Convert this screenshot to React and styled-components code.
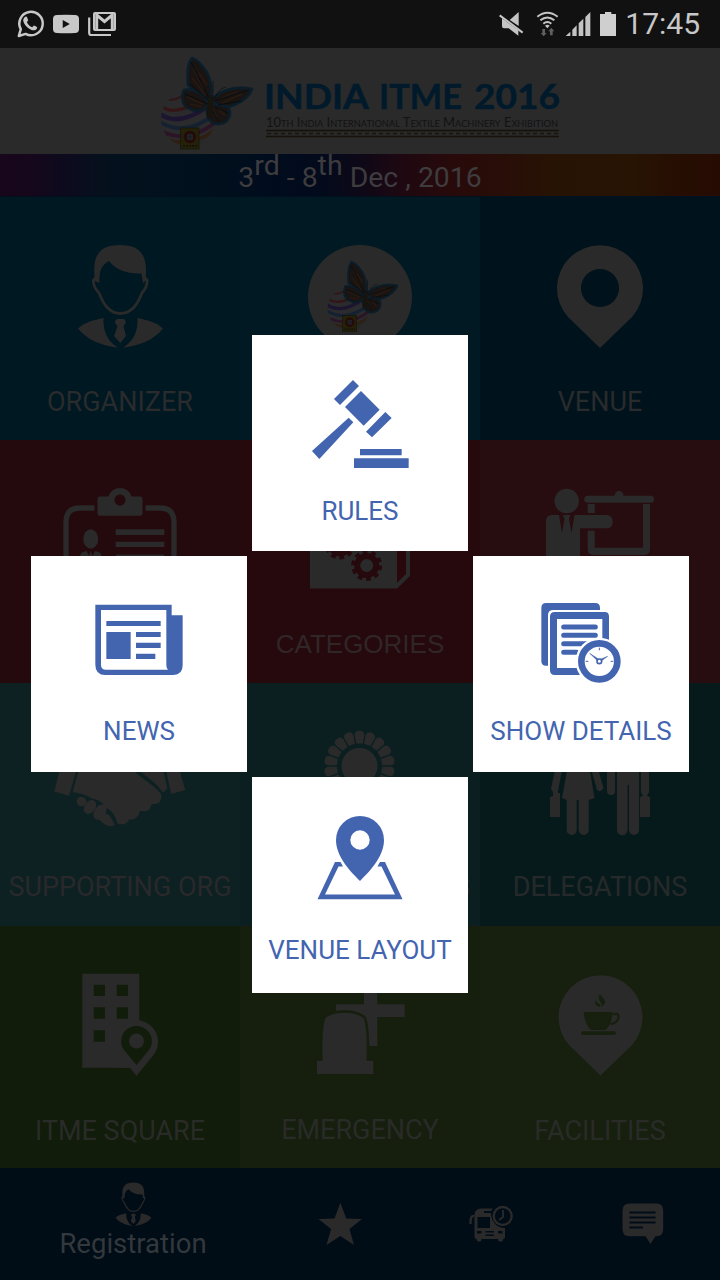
import React from 'react';
import styled, { createGlobalStyle } from 'styled-components';

const GlobalStyle = createGlobalStyle`
  * { box-sizing: border-box; }
  body { margin: 0; background: #000; font-family: Roboto, "Liberation Sans", sans-serif; }
`;

const INK = '#2a2a2a';
const BLUE = '#4365b0';

const Screen = styled.div`
  position: relative;
  width: 720px;
  height: 1280px;
  display: flex;
  flex-direction: column;
  overflow: hidden;
`;

const StatusBar = styled.div`
  height: 48px;
  flex: none;
  display: flex;
  justify-content: space-between;
  align-items: center;
  padding: 0 20px 0 16px;
  background: #111;
  color: #c8c8c8;
`;

const StatusIcons = styled.div`
  display: flex;
  align-items: center;
  svg { display: block; }
`;

const Clock = styled.span`
  font-size: 30px;
  line-height: 48px;
  margin-left: 8px;
`;

const Header = styled.header`
  height: 106px;
  flex: none;
  display: flex;
  justify-content: center;
  padding-top: 6px;
  background: #2a2a2a;
`;

const LogoArt = styled.svg`
  display: block;
  width: 440px;
  height: 96px;
  overflow: visible;
  font-family: Lato, sans-serif;
`;

const DateStrip = styled.div`
  height: 43px;
  flex: none;
  display: flex;
  justify-content: center;
  border-bottom: 1px solid #00101f;
  background: linear-gradient(90deg, #18061b 0%, #16071b 4%, #0d0a1d 9%, #06101d 14%, #02111d 20%, #01101d 28%, #000c1d 38%, #030a1c 45%, #100816 51%, #1f0811 56%, #280a0a 63%, #280d08 69%, #271304 77%, #271403 88%, #260e02 94%, #260b02 100%);
  color: #3e3c3e;
  font-size: 28.400px;
  line-height: 48px;
  white-space: pre;
`;

const Sup = styled.sup`
  font-size: 28.500px;
  line-height: 0;
  vertical-align: 12px;
`;

const Tiles = styled.main`
  display: grid;
  grid-template-columns: repeat(3, 240px);
  grid-template-rows: 243px 243px 243px 242px;
`;

const Tile = styled.div`
  display: flex;
  flex-direction: column;
  align-items: center;
  padding-top: 44px;
  background: ${(p) => p.$bg};
`;

const TileArt = styled.svg`
  display: block;
  width: 140px;
  height: 112px;
  flex: none;
`;

const TileLabel = styled.span`
  margin-top: ${(p) => p.$gap || 33}px;
  font-family: ${(p) => p.$font || 'Roboto'}, "Liberation Sans", sans-serif;
  font-size: ${(p) => p.$size || 27}px;
  line-height: 32px;
  color: ${(p) => p.$ink || '#292b2c'};
  white-space: nowrap;
`;

const BottomBar = styled.nav`
  height: 112px;
  flex: none;
  display: grid;
  grid-template-columns: 264px 151px 151px 153px;
  background: #000c16;
`;

const NavItem = styled.div`
  display: flex;
  flex-direction: column;
  align-items: center;
  justify-content: ${(p) => (p.$labelled ? 'flex-start' : 'center')};
  padding: ${(p) => (p.$labelled ? '14px 0 0 2px' : '0')};
  svg { display: block; }
`;

const NavLabel = styled.span`
  font-size: 27.5px;
  line-height: 34px;
  color: #33383d;
`;

const Overlay = styled.div`
  position: absolute;
  inset: 335px 31px auto 31px;
  display: grid;
  grid-template-columns: repeat(3, 216px);
  grid-template-rows: repeat(3, 216px);
  gap: 5px;
`;

const Card = styled.div`
  grid-area: ${(p) => p.$row} / ${(p) => p.$col};
  display: flex;
  flex-direction: column;
  align-items: center;
  padding-top: 38px;
  background: #fff;
`;

const CardArt = styled.svg`
  display: block;
  width: 110px;
  height: 100px;
  flex: none;
  fill: ${BLUE};
`;

const CardLabel = styled.span`
  margin-top: ${(p) => p.$gap}px;
  font-size: 26px;
  line-height: 30px;
  color: ${BLUE};
  white-space: nowrap;
`;

function Businessman({ width, height, ink = INK }) {
  return (
    <svg width={width} height={height} viewBox="77 244 87 105" fill={ink}>
      <path d="M95 281C92 258 97 245 120 245C143 245 148 258 145.500 281L143 283L141.500 273.500C127 274 116 270 109 261C101 265 99 272 99.500 283Z" />
      <path d="M95.500 278L93.300 280.500C93.500 289 97.500 290 99.500 294C104 306 111 313.500 120.300 313.500C129.500 313.500 137 306 141.500 294C143.500 290 147 289 147.200 280.500L145 278" fill="none" stroke={ink} strokeWidth="2.800" />
      <path d="M103.500 318C103 331 107 341 118 347.500C102 346 87 340 78 328.500C84 322.500 94 320 103.500 318Z" />
      <path d="M137.500 318C138 331 134 341 123 347.500C139 346 154 340 163 328.500C157 322.500 147 320 137.500 318Z" />
      <path d="M117 319H124L126 322L123.500 326.500L126 336L120.300 343L114 336L117.500 326.500L114.500 322Z" />
    </svg>
  );
}

function ButterflyMark() {
  return (
    <g>
      <clipPath id="globe"><circle cx="188" cy="119" r="27" /></clipPath>
      <g clipPath="url(#globe)" fill="none">
        <circle cx="188" cy="119" r="27" fill="#2b2b2d" />
        <path d="M168 99Q175 102 186 93" stroke="#2f1717" strokeWidth="2.500" />
        <path d="M163 107Q172 114 190 106" stroke="#331516" strokeWidth="3.200" />
        <path d="M160 114Q178 127 207 107" stroke="#1d1530" strokeWidth="4.500" />
        <path d="M160 122Q186 138 216 113" stroke="#142131" strokeWidth="3.800" />
        <path d="M163 132Q190 144 217 121" stroke="#2a1425" strokeWidth="3.600" />
        <path d="M168 140Q194 148 217 128" stroke="#301e10" strokeWidth="3.600" />
        <path d="M190 148Q209 143 216 131" stroke="#122c25" strokeWidth="3.600" />
      </g>
      <g fill="#191411" stroke="#0a1d29" strokeWidth="2.600" strokeLinejoin="round">
        <path d="M192 58C186 65 188 78 188 85C194 91 202 98 209 101C213 93 211 79 206 71C202 65 198 60 192 58Z" />
        <path d="M184 90C195 88 204 95 208 103C205 111 198 113 190 109C182 106 181 97 184 90Z" />
        <path d="M213 99C222 89 238 86 252 89C248 100 234 107 218 109Z" />
        <path d="M207 106C206 119 212 125 219 124C230 123 232 113 228 107L215 104Z" />
      </g>
      <g fill="none" stroke="#291910" strokeWidth="1.700">
        <path d="M193 68L204 89M192 78L205 95M199 73L207 85M187 97L203 104M190 104L202 107M219 99L237 92M222 103L242 94M212 108L217 118M218 108L225 116" />
      </g>
      <g fill="none" stroke="#070d12" strokeWidth="1">
        <path d="M191 62L209 98M190 84L208 100M185 94L208 104M214 101L249 90M218 105L241 101M210 107L219 122M215 107L228 113" />
        <path d="M213 99L213 81M214 99C218 91 222 88 226 87" strokeWidth=".7" />
      </g>
      <ellipse cx="210" cy="107" rx="3" ry="12" transform="rotate(8 210 107)" fill="#16140d" />
      <rect x="180.500" y="128" width="18.500" height="21" fill="#252108" stroke="#12120b" strokeWidth=".7" />
      <circle cx="190" cy="137" r="4.700" fill="#25262b" stroke="#230b09" strokeWidth="3" />
      <path d="M187 137H193M190 134V140" stroke="#17181d" strokeWidth="1" />
      <path d="M183 146H197" stroke="#15130a" strokeWidth="2" strokeDasharray="2 1" />
    </g>
  );
}

function Logo() {
  return (
    <LogoArt viewBox="140 54 440 96">
      <ButterflyMark />
      <g fill="#001a2b" stroke="#001a2b" strokeWidth=".5" fontWeight="700" fontSize="34">
        <text x="264" y="108.500" textLength="105" lengthAdjust="spacingAndGlyphs">INDIA</text>
        <text x="379" y="108.500" textLength="83" lengthAdjust="spacingAndGlyphs">ITME</text>
        <text x="474" y="108.500" textLength="86" lengthAdjust="spacingAndGlyphs">2016</text>
      </g>
      <text x="266" y="126.500" fill="#121212" fontSize="14" fontVariant="small-caps" textLength="292" lengthAdjust="spacingAndGlyphs">10th India International Textile Machinery Exhibition</text>
      <path d="M266 130.500H559M266 136.500H559" stroke="#171208" strokeWidth="1.300" />
      <path d="M267 133.500H559" stroke="#1a1509" strokeWidth="1.600" strokeDasharray="4 3" />
    </LogoArt>
  );
}

function LeftStatus() {
  return (
    <svg width="102" height="30" viewBox="16 8 102 30">
      <path d="M18.800 35L20.800 28.200A11.700 11.700 0 1 1 25.600 32.900Z" fill="none" stroke="#c8c8c8" strokeWidth="2.500" strokeLinejoin="round" />
      <path d="M24.700 16.200C26 15 27 15.700 27.300 17L28.200 19.200L26.900 21.200C28.300 24 29.800 25.200 32.200 26.300L33.900 24.500C35.300 25 36.300 25.600 37.300 26.400C36.800 29.200 33.500 30 31 28.700C26.800 26.800 24.300 23.700 23.300 20.200C23 18.600 23.700 17 24.700 16.200Z" fill="#c8c8c8" />
      <path fillRule="evenodd" fill="#c8c8c8" d="M57 14Q66 13.300 75 14Q79 14.200 79 18V28Q79 31.800 75 32Q66 32.700 57 32Q53 31.800 53 28V18Q53 14.200 57 14ZM62.700 19V27L69.800 23Z" />
      <rect x="94" y="12" width="21" height="17" rx="1" fill="none" stroke="#c8c8c8" strokeWidth="2" />
      <path d="M96.700 29V14L104.500 20.500L112.300 14V29" fill="none" stroke="#c8c8c8" strokeWidth="3" />
      <path d="M89.200 16.500V32Q89.200 34 91.200 34H111" fill="none" stroke="#c8c8c8" strokeWidth="2.200" />
    </svg>
  );
}

function RightStatus() {
  return (
    <svg width="118" height="30" viewBox="498 8 118 30">
      <g transform="translate(360 0) scale(.33333)" fill="#c4c4c4">
        <path d="M446 57L473 33V75Z" />
        <path d="M423 52L472 88V104L443 82H429Q423 82 423 76Z" />
        <path d="M416 43L485 95" stroke="#c4c4c4" strokeWidth="6" />
        <g fill="none" stroke="#c4c4c4" strokeWidth="6">
          <path d="M529 47Q559 23 590 47M538 58Q559 41 580 58M547 68Q559 58 571 68" />
        </g>
        <path d="M559 82L552 74Q559 68 566 74Z" />
        <path d="M544 84H552V96H557L548 106L539 96H544ZM567 103H575V91H580L571 80L562 91H567Z" fill="#5f5f5f" />
        <path d="M614 105L628 92V105ZM634 86L647 73V105H634ZM653 67L667 53V105H653ZM673 48L688 33V105H673Z" />
        <path d="M732 33H751V39H765V105H717V39H732Z" fill="#cfcfcf" />
      </g>
    </svg>
  );
}

const ArtSlot = styled.div`
  display: flex;
  justify-content: center;
  height: 112px;
  padding-top: 3px;
`;

const OrganizerArt = () => (
  <ArtSlot><Businessman width={87} height={105} /></ArtSlot>
);

const EventArt = () => (
  <TileArt viewBox="290 241 140 112">
    <circle cx="360" cy="297" r="52" fill={INK} />
    <g transform="translate(204.500 217.500) scale(.765)"><ButterflyMark /></g>
  </TileArt>
);

const VenueArt = () => (
  <TileArt viewBox="530 241 140 112" fill={INK}>
    <path fillRule="evenodd" d="M600 348L568 317A43 43 0 1 1 632 317ZM619 288A19 19 0 1 0 581 288A19 19 0 1 0 619 288Z" />
  </TileArt>
);

const BadgeArt = () => (
  <TileArt viewBox="50 484 140 112" fill={INK}>
    <path d="M94.500 508H80Q66 508 66 522V580M145.500 508H160Q174 508 174 522V580" fill="none" stroke={INK} strokeWidth="5.300" />
    <path fillRule="evenodd" d="M99.500 496.500H108.500A12 12 0 0 1 131.500 496.500H140.500Q142.500 496.500 142.500 498.500V513.500Q142.500 515.700 140.500 515.700H99.500Q97.500 515.700 97.500 513.500V498.500Q97.500 496.500 99.500 496.500ZM125.500 500A5.500 5.500 0 1 0 114.500 500A5.500 5.500 0 1 0 125.500 500Z" />
    <ellipse cx="90.700" cy="539" rx="7.500" ry="9.700" />
    <path d="M80 556Q80 552 86.500 551L89 556L90.700 551L92.500 556L95 551Q101.500 552 101.500 556V565H80Z" />
    <path d="M115.700 529.300H164.300V535H115.700ZM115.700 541.700H164.300V547H115.700ZM115.700 554.500H164.300V560H115.700Z" />
  </TileArt>
);

function Gear({ cx, cy, color }) {
  return (
    <g fill="none" stroke={color}>
      <circle cx={cx} cy={cy} r="9.500" strokeWidth="6" />
      <circle cx={cx} cy={cy} r="13.500" strokeWidth="4" strokeDasharray="4.600 3.882" />
    </g>
  );
}

const CategoriesArt = () => (
  <TileArt viewBox="290 484 140 112">
    <path d="M310 520H410V576L397 588.500H310Z" fill={INK} />
    <path d="M397 535L406 530V574L397 583Z" fill="#28080c" />
    <Gear cx="366.700" cy="565.500" color="#25090d" />
    <Gear cx="340" cy="544" color="#25090d" />
  </TileArt>
);

const PresenterArt = () => (
  <TileArt viewBox="530 484 140 112" fill={INK}>
    <circle cx="566.700" cy="501" r="12.200" />
    <path d="M552 515H606Q612.700 515 612.700 521.700Q612.700 528.300 606 528.300H580V570H546V521Q546 515 552 515Z" />
    <path d="M559 515L562 533L564.500 519L563 515ZM574.500 515L571.500 533L569 519L570.500 515Z" fill="#280d10" />
    <rect x="584.300" y="495.700" width="69.700" height="7" rx="3.500" />
    <path d="M614.500 496A4.500 5 0 0 1 623.500 496Z" />
    <path d="M587.700 504H594.700V513H587.700ZM587.700 530.700H594.700V547.700H643V504H650V549Q650 555 644 555H594Q587.700 555 587.700 549Z" />
  </TileArt>
);

const HandshakeArt = () => (
  <TileArt viewBox="50 727 140 112" fill={INK}>
    <path d="M61 765H78L69 795.700L54.300 791.500Z" />
    <path d="M165 765H178L185.300 790L171 794Z" />
    <path d="M141 765H162L167.500 788.500L163 792.500C157 784 149 778 142 773Z" />
    <path d="M80 765H128L136 773C145 780 157 788 161 794C162.500 799 160 804 154 804C151 804 151 806 150 808.500C148 812 144 811 140 811C138 818 135 819.500 129 819.500C128 824 123 826 117 823C116 816 112 811 106 807.500C102 801 96 799 91 798.500C88 795 78 793 72.700 792Z" />
    <ellipse cx="81.500" cy="801.500" rx="4.800" ry="4.800" />
    <ellipse cx="90" cy="807" rx="5.500" ry="7.500" transform="rotate(35 90 807)" />
    <ellipse cx="100" cy="812" rx="5.500" ry="8.500" transform="rotate(35 100 812)" />
    <path d="M97 818Q106 809 111 818L115 825Q108 828 103 823Z" />
  </TileArt>
);

const AwardArt = () => (
  <TileArt viewBox="290 727 140 112" fill={INK}>
    {Array.from({ length: 18 }, (_, i) => (
      <path key={i} d="M356.300 743.500L354.700 735Q354.700 730.700 359.500 730.700Q364.300 730.700 364.300 735L362.700 743.500Z" transform={`rotate(${i * 20} 359.500 766)`} />
    ))}
    <circle cx="359.500" cy="766" r="18" />
  </TileArt>
);

const DelegationsArt = () => (
  <TileArt viewBox="530 727 140 112" fill={INK}>
    <path d="M556 765H563L558 791V793H560V796.500Q560 797 560 817H550V797L553 796V792L551 789Z" />
    <path d="M568 765H589L594.500 798L588.700 800V830A5 5 0 0 1 578.700 830V800H576.700V830A5 5 0 0 1 566.700 830V800L562 798Z" />
    <path d="M590 765H597L603.500 788Q601 793 597 790Z" />
    <path d="M607 765H615V791A4 4 0 0 1 607 791ZM617 765H639V830A5 5 0 0 1 629 830V785H627.500V830A5 5 0 0 1 617 830Z" />
    <path d="M641 765H649V792L647 796L650 797V817H640V797L643 796L641 792Z" />
  </TileArt>
);

const SquareArt = () => (
  <TileArt viewBox="50 970 140 112" fill={INK}>
    <path fillRule="evenodd" d="M82.300 973.700H139.300V1067.700H82.300ZM93.700 984.700V996H105V984.700ZM116.700 984.700V996H128V984.700ZM93.700 1007.300V1018.700H105V1007.300ZM116.700 1007.300V1018.700H128V1007.300ZM93.700 1030.300V1041.700H105V1030.300Z" />
    <path d="M136.500 1075.700L119.500 1055A21.500 21.500 0 1 1 153.500 1055Z" />
    <path d="M139.500 1067.700H129L118 1055L116 1067.700Z" />
    <path d="M136.500 1065L124 1050A15.300 15.300 0 1 1 149 1050Z" fill="#111c0a" />
    <circle cx="136.500" cy="1041" r="7.500" />
  </TileArt>
);

const EmergencyArt = () => (
  <TileArt viewBox="290 970 140 112" fill={INK}>
    <path d="M364 970H377.300V1004.300H404.700V1017H377.300V1046H364V1017H336V1004.300H364Z" />
    <path d="M322.700 1060.700C322 1038 323 1024 325.500 1018Q332 1012.700 345 1012.700Q357 1012.700 363.500 1018C367 1026 367 1044 366.500 1060.700H373.300V1074H317V1060.700Z" stroke="#161f0d" strokeWidth="5" paintOrder="stroke" />
  </TileArt>
);

const FacilitiesArt = () => (
  <TileArt viewBox="530 970 140 112" fill={INK}>
    <path d="M600.500 1075.500L569 1045A42 42 0 1 1 632 1045Z" />
    <g fill="#17200e">
      <path d="M583.700 1012H612.700Q612 1024 605.500 1030H591Q584.500 1024 583.700 1012Z" />
      <path d="M613 1014.500Q618.800 1012.500 618.500 1017Q618 1023 610.500 1024" fill="none" stroke="#17200e" strokeWidth="2.300" />
      <rect x="581" y="1031.300" width="35" height="3.600" rx="1.800" />
      <path d="M600 994C603 999 607 1001 604.500 1004L601.500 1007C603 1002 596 1001 600 994ZM597 1000C595 1003 602 1004 600 1007C596 1006 593 1003 597 1000Z" />
    </g>
  </TileArt>
);

const TILES = [
  { bg: '#001822', Art: OrganizerArt, label: 'ORGANIZER' },
  { bg: '#001923', Art: EventArt },
  { bg: '#00121b', Art: VenueArt, label: 'VENUE' },
  { bg: '#24090d', Art: BadgeArt },
  { bg: '#25090d', Art: CategoriesArt, label: 'CATEGORIES', font: '"Liberation Sans"', size: 26, ink: '#302628', gap: 32 },
  { bg: '#280d10', Art: PresenterArt },
  { bg: '#0d2022', Art: HandshakeArt, label: 'SUPPORTING ORG', gap: 32, ink: '#29292c' },
  { bg: '#0b1f21', Art: AwardArt, label: 'MEDIA PARTNERS', gap: 32, ink: '#29292c' },
  { bg: '#061a1c', Art: DelegationsArt, label: 'DELEGATIONS', gap: 32, ink: '#26292a' },
  { bg: '#111c0a', Art: SquareArt, label: 'ITME SQUARE', ink: '#292b28' },
  { bg: '#161f0d', Art: EmergencyArt, label: 'EMERGENCY', gap: 32, ink: '#292b28' },
  { bg: '#17200e', Art: FacilitiesArt, label: 'FACILITIES', ink: '#292b28' },
];

const RulesArt = () => (
  <CardArt viewBox="305 373 110 100">
    <g transform="translate(250 335) scale(.33333)">
      <path d="M309 135L327 153L270 210L252 192ZM333 168L389 224L341 272L285 216ZM406 231L425 249L366 307L348 290ZM296 248L310 262L208 372L186 348ZM330 342H455V361H330ZM312 370H476V399H312Z" />
    </g>
  </CardArt>
);

const NewsArt = () => (
  <CardArt viewBox="84 594 110 100">
    <g transform="translate(30 556) scale(.33333)">
      <path fillRule="evenodd" d="M196 146H425V178H458V328Q458 357 430 357H226Q196 357 196 326ZM213 162V326Q213 341 228 341H414Q409 336 409 328V162Z" />
      <path d="M229 195H392V210H229ZM229 228H302V309H229ZM318 228H392V243H318ZM318 260H392V276H318ZM318 293H376V309H318Z" />
    </g>
  </CardArt>
);

const ShowDetailsArt = () => (
  <CardArt viewBox="526 594 110 100">
    <g transform="translate(460 440) scale(.33333)">
      <path d="M244 503Q244 489 258 489H406Q420 489 420 503V510H280Q264 510 264 526V677H258Q244 677 244 663Z" />
      <path fillRule="evenodd" d="M284 516H434Q447 516 447 529V692Q447 705 434 705H284Q270 705 270 691V530Q270 516 284 516ZM291 537V684H427V537Z" />
      <path d="M311 561H406M311 586H406M311 611H406M311 637H350" stroke={BLUE} strokeWidth="15" strokeLinecap="round" />
      <circle cx="418" cy="664" r="71" fill="#fff" />
      <circle cx="418" cy="664" r="54" fill="#fff" stroke={BLUE} strokeWidth="20" />
      <path d="M418 623V631M377 664H385M452 664H460" stroke={BLUE} strokeWidth="3" />
      <path d="M389 640L412 655L418 659L443 649L425 662L410 660Z" stroke={BLUE} strokeWidth="1.500" />
      <circle cx="418" cy="664" r="7" fill="#fff" stroke={BLUE} strokeWidth="5" />
    </g>
  </CardArt>
);

const VenueLayoutArt = () => (
  <CardArt viewBox="305 815 110 100">
    <path fillRule="evenodd" d="M360 881C351 872 336 857 336 840A24 24 0 0 1 384 840C384 857 369 872 360 881ZM369.700 840A9.700 9.700 0 1 0 350.300 840A9.700 9.700 0 1 0 369.700 840Z" />
    <path d="M335 862H340.500L343 866.500H338.500L325 894.500H395L381.500 866.500H377.500L380 862H385L402.500 899.300H317.500Z" />
  </CardArt>
);

const CARDS = [
  { row: 1, col: 2, Art: RulesArt, label: 'RULES', gap: 23 },
  { row: 2, col: 1, Art: NewsArt, label: 'NEWS', gap: 22 },
  { row: 2, col: 3, Art: ShowDetailsArt, label: 'SHOW DETAILS', gap: 22 },
  { row: 3, col: 2, Art: VenueLayoutArt, label: 'VENUE LAYOUT', gap: 20 },
];

const StarArt = () => (
  <svg width="46" height="46" viewBox="317 1201 46 46" fill={INK}>
    <path d="M340.300 1202.700L346.300 1218.500L362 1219L349.500 1229L354 1245L340.300 1236L326.500 1245L331 1229L318.500 1219L334.500 1218.500Z" />
  </svg>
);

const BusArt = () => (
  <svg width="46" height="40" viewBox="468 1204 46 40" fill={INK}>
    <path fillRule="evenodd" d="M474.500 1215Q474.500 1209 481 1208.500H493L491 1211H484V1213H491Q491 1219 495 1224Q499 1228 505 1228V1237Q505 1239 503 1239V1240Q503 1241.500 501 1241.500H499.500Q498 1241.500 498 1239H481.500Q481.500 1241.500 480 1241.500H478.500Q476.500 1241.500 476.500 1239Q474.500 1239 474.500 1237ZM477.500 1217V1228H490V1217ZM477 1231V1233.500H481.500V1231ZM485.500 1231V1232.500H494V1231ZM485.500 1234.500V1236H494V1234.500ZM498 1231V1233.500H502.500V1231Z" />
    <path d="M474.500 1216Q470 1215 470.500 1224" fill="none" stroke={INK} strokeWidth="2.300" />
    <circle cx="502.700" cy="1216" r="9" fill="#000c16" stroke={INK} strokeWidth="2.300" />
    <path d="M503 1210V1217L499 1220" fill="none" stroke={INK} strokeWidth="1.800" />
  </svg>
);

const ChatArt = () => (
  <svg width="42" height="42" viewBox="621.500 1203.500 42 42" fill={INK}>
    <path d="M629 1204H656Q662.700 1204 662.700 1211V1230Q662.700 1236.700 656 1236.700H655L650 1244.500L645 1236.700H629Q622 1236.700 622 1230V1211Q622 1204 629 1204Z" />
    <path d="M629 1213H655M629 1218H655M629 1223H655M629 1228H642.500" stroke="#000c16" strokeWidth="2.200" />
  </svg>
);

export default function App() {
  return (
    <>
      <GlobalStyle />
      <Screen>
        <StatusBar>
          <StatusIcons><LeftStatus /></StatusIcons>
          <StatusIcons><RightStatus /><Clock>17:45</Clock></StatusIcons>
        </StatusBar>
        <Header><Logo /></Header>
        <DateStrip><span>3<Sup>rd</Sup> - 8<Sup>th</Sup> Dec , 2016</span></DateStrip>
        <Tiles>
          {TILES.map(({ bg, Art, label, font, size, ink, gap }, i) => (
            <Tile key={i} $bg={bg}>
              <Art />
              {label && <TileLabel $font={font} $size={size} $ink={ink} $gap={gap}>{label}</TileLabel>}
            </Tile>
          ))}
        </Tiles>
        <BottomBar>
          <NavItem $labelled>
            <Businessman width={37} height={44.500} />
            <NavLabel>Registration</NavLabel>
          </NavItem>
          <NavItem><StarArt /></NavItem>
          <NavItem><BusArt /></NavItem>
          <NavItem><ChatArt /></NavItem>
        </BottomBar>
        <Overlay>
          {CARDS.map(({ row, col, Art, label, gap }) => (
            <Card key={label} $row={row} $col={col}>
              <Art />
              <CardLabel $gap={gap}>{label}</CardLabel>
            </Card>
          ))}
        </Overlay>
      </Screen>
    </>
  );
}
